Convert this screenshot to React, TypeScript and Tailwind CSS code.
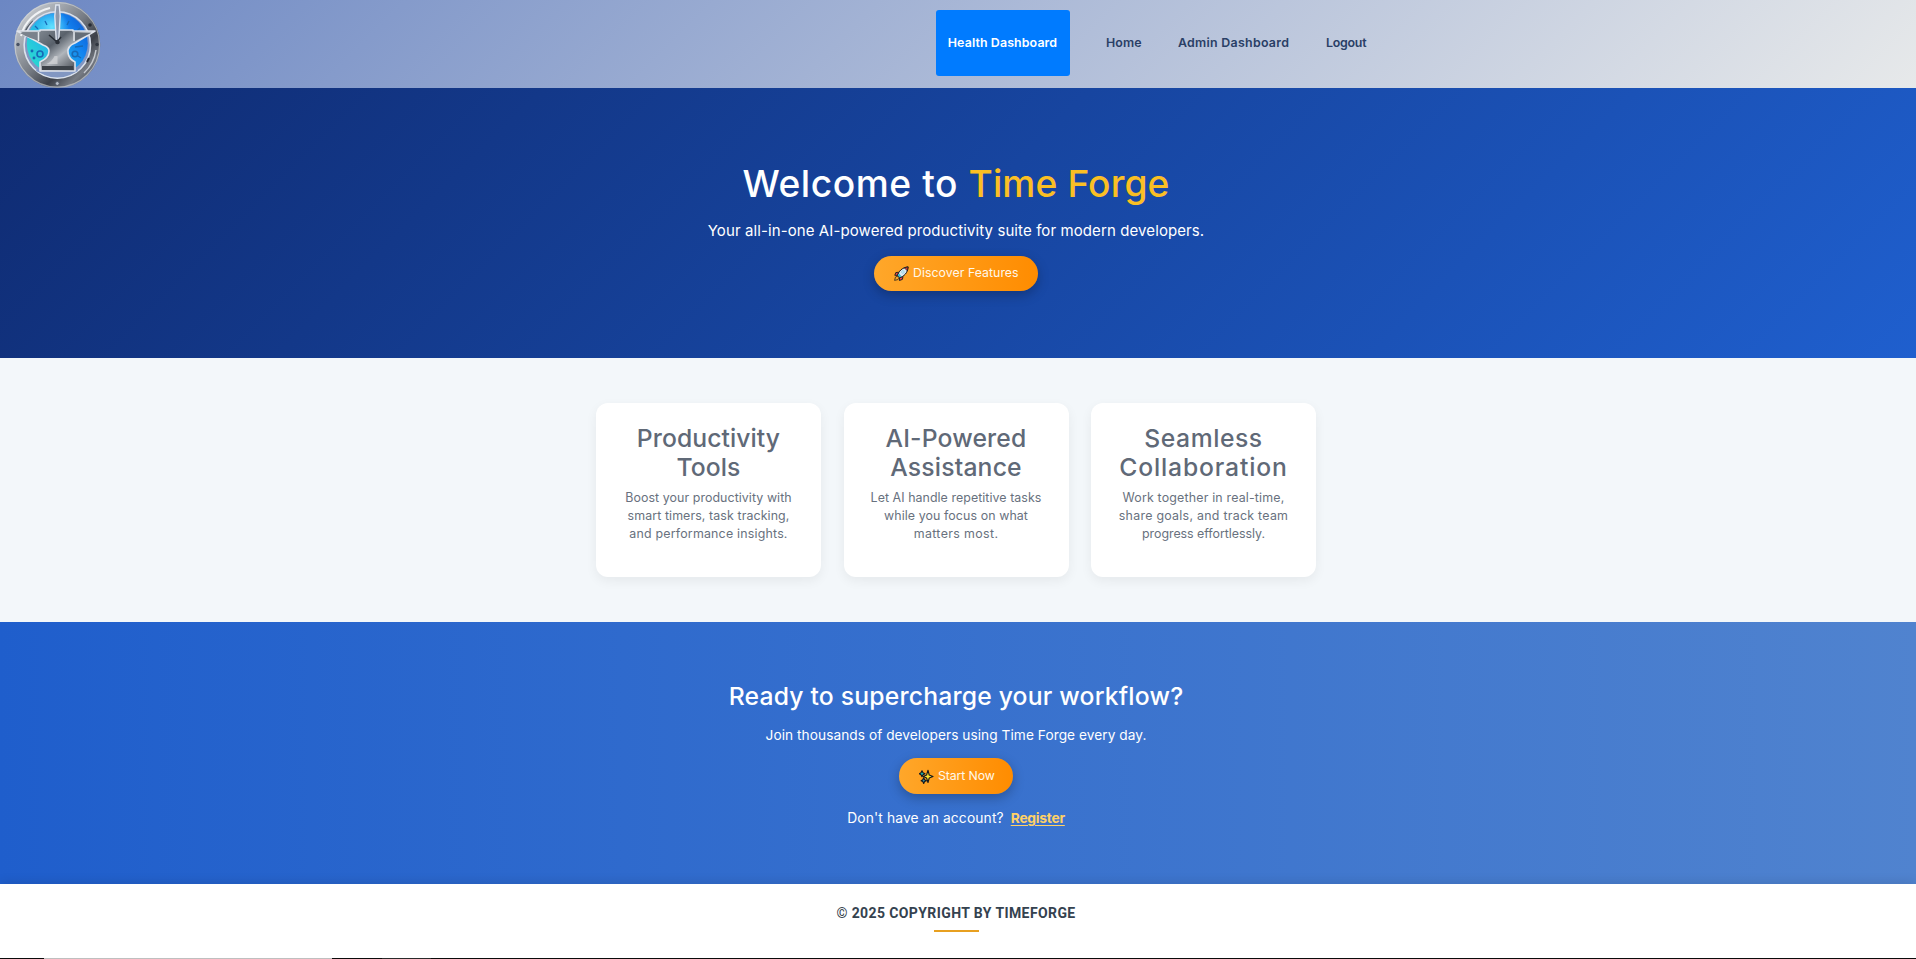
function Logo() {
  return (
    <svg className="ml-[13px] h-[88px] w-[88px] shrink-0" viewBox="13 0 88 88" fill="none">
      <defs>
        <linearGradient id="rim" x1="20" y1="8" x2="94" y2="82" gradientUnits="userSpaceOnUse">
          <stop offset="0" stopColor="#cfd3d8" />
          <stop offset="0.25" stopColor="#a4a9b0" />
          <stop offset="0.5" stopColor="#747981" />
          <stop offset="0.7" stopColor="#3c4048" />
          <stop offset="0.85" stopColor="#777c84" />
          <stop offset="1" stopColor="#44484f" />
        </linearGradient>
        <linearGradient id="face" x1="26" y1="62" x2="86" y2="24" gradientUnits="userSpaceOnUse">
          <stop offset="0" stopColor="#2be0cc" />
          <stop offset="0.4" stopColor="#24b4ea" />
          <stop offset="0.75" stopColor="#1283f0" />
          <stop offset="1" stopColor="#0f5fd6" />
        </linearGradient>
        <radialGradient id="glow" cx="52" cy="27" r="17" gradientUnits="userSpaceOnUse">
          <stop offset="0" stopColor="#62e2ff" />
          <stop offset="1" stopColor="#62e2ff" stopOpacity="0" />
        </radialGradient>
        <linearGradient id="steel" x1="40" y1="30" x2="74" y2="72" gradientUnits="userSpaceOnUse">
          <stop offset="0" stopColor="#7e868f" />
          <stop offset="0.35" stopColor="#59616b" />
          <stop offset="0.6" stopColor="#b1b6bc" />
          <stop offset="1" stopColor="#3f454d" />
        </linearGradient>
      </defs>
      <circle cx="57.3" cy="44.8" r="38.3" stroke="url(#rim)" strokeWidth="9.4" />
      <circle cx="57.3" cy="44.8" r="42.3" stroke="#d3d8de" strokeOpacity="0.6" strokeWidth="1.2" />
      <path d="M21 36a38 38 0 0 1 29-28" stroke="#f0f2f4" strokeWidth="2" />
      <path d="M24 34a36 36 0 0 1 9-13" stroke="#565c66" strokeWidth="1.5" />
      <path d="M96 50a39 39 0 0 1-12 23" stroke="#c5c9cf" strokeWidth="1.5" />
      <circle cx="57.3" cy="45" r="33.2" fill="#8297c2" stroke="#dbe2ec" strokeWidth="1.6" />
      <circle cx="57.3" cy="43.5" r="30.5" fill="url(#face)" />
      <circle cx="57.3" cy="43.5" r="30.5" fill="url(#glow)" />
      <path d="M38 67q19 8 38 0l2 4q-20 11-42 0Z" fill="#8297c2" />
      <g stroke="#1769b6" strokeWidth="1.3">
        <path d="m45 21 2 4M69 21l-2 4M35 26l3 3M80 28l-3 3M75 47l8-1M78 56l3 2" />
        <circle cx="40" cy="54" r="3" strokeWidth="1.6" />
        <circle cx="75" cy="54" r="2.8" strokeWidth="1.6" />
        <circle cx="32" cy="51" r="0.8" />
        <circle cx="34" cy="58" r="0.8" />
      </g>
      <path
        d="M17 31h23v-1h33v1h22l-20 12q-8 3-7 10 1 6 7 9v9H40v-9q9-4 9-11 0-4-6-6l-7-4Z"
        fill="url(#steel)" stroke="#dfe3eb" strokeWidth="1.6" strokeLinejoin="round"
      />
      <path d="M20 33h19v7q-9-1-19-7Z" fill="#7a828c" />
      <path d="M75 33h16L75 41Z" fill="#656d77" />
      <path d="M38.5 32v9M74 32v9" stroke="#e1e5ea" strokeWidth="1.5" />
      <path d="M42 66h31v4H42Z" fill="#3c4249" />
      <path d="M54.5 56q-2 5-8 8h11v-8Z" fill="#d4d6d9" opacity="0.7" />
      <path d="M55.8 5h3.4l1 11-1.5 25h-2.4l-1.5-25Z" fill="#8d97aa" stroke="#dee4ee" strokeWidth="1.4" />
      <path d="m49 35 8 7 4-5" stroke="#282d35" strokeWidth="1.5" />
      <circle cx="57.5" cy="42" r="2.3" fill="#2b3038" />
      <circle cx="18" cy="44.5" r="1.7" fill="#495264" />
      <circle cx="97" cy="44.5" r="1.7" fill="#30363f" />
      <circle cx="90" cy="25" r="1.8" fill="#272c34" />
      <path d="m87 62 2-4" stroke="#252932" strokeWidth="2" />
      <circle cx="57.3" cy="83.5" r="2" fill="#b7bdc8" stroke="#515966" />
    </svg>
  );
}

function Rocket() {
  return (
    <svg className="h-[15px] w-[15px] shrink-0" viewBox="0 0 15 15" fill="none" strokeLinejoin="round">
      <path d="m4.5 6.2-2.7.4L.8 9.3l3 .1ZM9 10.6l-.6 2.8-3 1.1.1-3.2Z" fill="#e5484d" stroke="#15181d" strokeWidth="0.9" />
      <path d="m3.4 10-2 1.2-.8 3.2 3.3-.8 1.3-1.8Z" fill="#f7a325" stroke="#15181d" strokeWidth="0.7" />
      <path d="M3.5 9.7C4.5 5.5 8 1.4 14.1.9 13.8 7 9.7 10.7 5.4 11.7Z" fill="#dce9ee" stroke="#15181d" />
      <path d="M10.3 1.8 14.1.9l-.8 3.9Z" fill="#d93a35" stroke="#15181d" strokeWidth="0.7" />
      <circle cx="8.9" cy="6" r="1.2" fill="#fff" stroke="#59b6d2" strokeWidth="0.6" />
      <path d="m3.8 9.2 1.9 2 1.6-1-2.2-2.6Z" fill="#2abbd0" />
    </svg>
  );
}

function Sparkles() {
  return (
    <svg className="h-[15px] w-[15px] shrink-0" viewBox="0 0 15 15" strokeLinejoin="round" stroke="#15181d">
      <path d="m3 1.7 1 2.1 2 .9-2 1-1 2.1-1-2.1-1.8-1 1.8-.9Z" fill="#20c0b6" strokeWidth="1.1" />
      <path d="m4.7 8.7.9 2 1.8 1-1.8.9-.9 2-.9-2-1.7-.9 1.7-1Z" fill="#3a9bb0" strokeWidth="1.1" />
      <path d="M9 1.2 10.2 6 14 7.5 10.2 9 9 13.5 7.6 9 4.2 7.5 7.6 6Z" fill="#ffe52c" strokeWidth="1.1" />
    </svg>
  );
}

const pill =
  "flex items-center gap-1 rounded-full bg-[linear-gradient(90deg,#ffa72a,#ff8c00)] text-[12.3px] text-[#fff8ea] shadow-[0_4px_12px_rgba(0,0,0,0.25)]";

const cards = [
  {
    title: [
      { text: "Productivity", style: "tracking-[0.08px]" },
      { text: "Tools", style: "tracking-[0.1px]" },
    ],
    body: [
      { text: "Boost your productivity with", style: "tracking-[0.07px]" },
      { text: "smart timers, task tracking,", style: "tracking-[0.1px]" },
      { text: "and performance insights.", style: "tracking-[0.2px]" },
    ],
  },
  {
    title: [
      { text: "AI-Powered", style: "tracking-[0.17px]" },
      { text: "Assistance", style: "tracking-[0.2px]" },
    ],
    body: [
      { text: "Let AI handle repetitive tasks", style: "tracking-[0.06px]" },
      { text: "while you focus on what", style: "tracking-[0.09px]" },
      { text: "matters most.", style: "tracking-[0.37px]" },
    ],
  },
  {
    title: [
      { text: "Seamless", style: "tracking-[0.56px]" },
      { text: "Collaboration", style: "tracking-[0.85px]" },
    ],
    body: [
      { text: "Work together in real-time,", style: "tracking-[0.18px]" },
      { text: "share goals, and track team", style: "tracking-[0.27px]" },
      { text: "progress effortlessly.", style: "tracking-[-0.03px]" },
    ],
  },
];

export default function App() {
  return (
    <div className="flex h-[959px] w-full flex-col overflow-hidden bg-white font-['Inter','Liberation_Sans',sans-serif]">
      <header className="flex h-[88px] shrink-0 bg-[linear-gradient(135deg,#6c87c3,#e7e9ea)]">
        <Logo />
        <nav className="ml-[835px] flex h-[86px] items-center gap-9 text-[12.4px] font-semibold whitespace-nowrap text-[#2a3f66]">
          <a className="flex h-[66px] w-[134px] items-center justify-center rounded-[3px] bg-[#007bff] pr-px tracking-[0.11px] text-white">
            Health Dashboard
          </a>
          <a className="w-[36px] tracking-[0.1px]">Home</a>
          <a className="w-[112px] tracking-[0.28px]">Admin Dashboard</a>
          <a className="tracking-[-0.25px]">Logout</a>
        </nav>
      </header>

      <section className="flex h-[270px] shrink-0 flex-col items-center bg-[linear-gradient(135deg,#0f2b72,#1f5fce)] pt-[72px] pr-1 whitespace-nowrap text-white">
        <h1 className="text-[37.2px] leading-[48px] font-medium tracking-[0.55px]">
          Welcome to <span className="tracking-[0.1px] text-[#fbbf24]">Time Forge</span>
        </h1>
        <p className="mt-[11px] text-[15px] leading-6 tracking-[0.1px]">
          Your all-in-one AI-powered productivity suite for modern developers.
        </p>
        <button className={`${pill} mt-[13px] h-[35px] w-[164px] pl-5 tracking-[0.05px]`}>
          <Rocket />
          Discover Features
        </button>
      </section>

      <section className="flex h-[264px] shrink-0 justify-center gap-[22.5px] bg-[#f3f7fa] pt-[45px] pr-1">
        {cards.map((card) => (
          <article
            key={card.title[0].text}
            className="h-[174px] w-[225px] rounded-xl bg-white pt-[21px] text-center whitespace-nowrap shadow-[0_4px_12px_rgba(0,0,0,0.06)]"
          >
            <h2 className="text-[24.7px] leading-[29px] font-medium text-[#606977]">
              {card.title.map((line) => (
                <span key={line.text} className={`block ${line.style}`}>{line.text}</span>
              ))}
            </h2>
            <p className="mt-[7px] text-[12.4px] leading-[18px] text-[#68717e]">
              {card.body.map((line) => (
                <span key={line.text} className={`block ${line.style}`}>{line.text}</span>
              ))}
            </p>
          </article>
        ))}
      </section>

      <section className="flex h-[262px] shrink-0 flex-col items-center bg-[linear-gradient(90deg,#1f5ecc,#5083cf)] pt-[58px] pr-1 whitespace-nowrap text-white">
        <h2 className="text-[24.7px] leading-8 font-medium tracking-[0.2px]">Ready to supercharge your workflow?</h2>
        <p className="mt-[13px] text-[13.7px] leading-5 tracking-[0.05px]">
          Join thousands of developers using Time Forge every day.
        </p>
        <button className={`${pill} mt-[13px] h-9 w-[114px] pl-5 tracking-[-0.1px]`}>
          <Sparkles />
          Start Now
        </button>
        <p className="mt-[14px] flex gap-[7px] text-[13.8px] leading-5 tracking-[0.14px]">
          Don't have an account?
          <a className="font-bold tracking-[-0.25px] text-[#ffd166] underline underline-offset-2">Register</a>
        </p>
      </section>

      <footer className="flex h-[74px] shrink-0 flex-col items-center bg-white pt-[19px] pr-1 shadow-[0_-2px_10px_rgba(0,0,0,0.1)]">
        <p className="font-['Roboto',sans-serif] text-[14px] leading-5 font-bold tracking-[0.4px] text-[#34424f]">
          © 2025 COPYRIGHT BY TIMEFORGE
        </p>
        <div className="mt-[7px] h-[2px] w-[45px] bg-[#e8a020]" />
      </footer>

      <div className="flex h-px shrink-0 bg-[#0b0b0b]">
        <div className="ml-11 w-72 bg-[#bfbfbf]" />
        <div className="ml-[50px] w-[49px] bg-[#2a2a2a]" />
      </div>
    </div>
  );
}
